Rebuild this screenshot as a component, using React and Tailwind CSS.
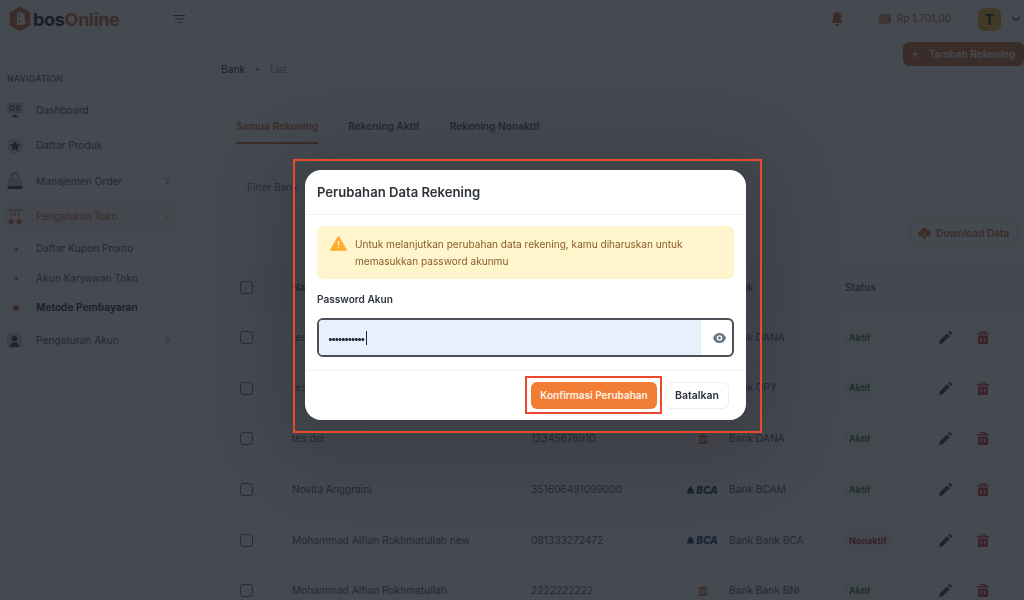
import { ChevronRight, ChevronDown, Plus } from "lucide-react";

const rows = [
  { name: "tes", number: "", logo: "", bank: "Bank DANA", active: true },
  { name: "tes", number: "", logo: "", bank: "Bank GPY", active: true },
  { name: "tes del", number: "12345678910", logo: "bank", bank: "Bank DANA", active: true },
  { name: "Novita Anggraini", number: "351606491099000", logo: "bca", bank: "Bank BCAM", active: true },
  { name: "Mohammad Alfian Rokhmatullah new", number: "081333272472", logo: "bca", bank: "Bank Bank BCA", active: false },
  { name: "Mohammad Alfian Rokhmatullah", number: "2222222222", logo: "bank", bank: "Bank Bank BNI", active: true },
];

function LogoMark() {
  return (
    <svg width="22" height="24" viewBox="0 0 22 24" className="shrink-0">
      <path d="M11 0.500 20.500 6v12L11 23.500 1.500 18V6z" fill="#c9703a" stroke="#c9703a" strokeLinejoin="round" strokeWidth="1.500" />
      <path d="M8 5.500h4.500a3.200 3.200 0 0 1 2 5.700 3.600 3.600 0 0 1-1.800 6.800H8z" fill="#ffffff" />
      <path d="M10.500 8.500v2M10.500 13.500v2" stroke="#c9703a" strokeWidth="1.600" />
    </svg>
  );
}

function DashboardIcon() {
  return (
    <svg width="16" height="16" viewBox="0 0 16 16" fill="none">
      <rect x="0.500" y="0.500" width="15" height="11" rx="1.500" fill="#c0c8cf" />
      <circle cx="5" cy="6" r="2.200" stroke="#3f4a57" />
      <path d="M9 4.500h4M9 6.200h4M9 8h4" stroke="#3f4a57" />
      <path d="M5 14.500h6M8 12v2" stroke="#3f4a57" strokeWidth="1.400" />
    </svg>
  );
}

function StarIcon() {
  return (
    <svg width="16" height="16" viewBox="0 0 16 16">
      <circle cx="8" cy="8" r="8" fill="#d5dbe0" />
      <path d="m8 3 1.600 3.300 3.600.5-2.600 2.500.6 3.600L8 10.700l-3.200 1.700.6-3.600-2.600-2.500 3.600-.5z" fill="#3f4a57" />
    </svg>
  );
}

function BagIcon() {
  return (
    <svg width="16" height="18" viewBox="0 0 16 18" fill="none">
      <path d="M1.500 6.500h13l1 8.500H.5z" fill="#c0c8cf" />
      <path d="M4.800 6.500V4a3.200 3.200 0 0 1 6.400 0v2.500" stroke="#3f4a57" />
      <rect x="0.500" y="14" width="15" height="3" rx="1" fill="#3f4a57" />
    </svg>
  );
}

function StoreIcon() {
  return (
    <svg width="16" height="16" viewBox="0 0 16 16" fill="none">
      <path d="M1 1h14M3.500 1l1.500 7M12.500 1 11 8M8 1v6" stroke="#d9a688" strokeWidth="1.400" />
      <circle cx="4" cy="12.500" r="2.600" fill="#c9703a" />
      <circle cx="12" cy="12.500" r="2.600" fill="#c9703a" />
    </svg>
  );
}

function UserIcon() {
  return (
    <svg width="15" height="15" viewBox="0 0 15 15">
      <rect width="15" height="15" rx="2" fill="#d5dbe0" />
      <circle cx="7.500" cy="5.500" r="2.800" fill="#3f4a57" />
      <path d="M2.800 14c.3-3.200 2.200-4.800 4.700-4.800s4.400 1.600 4.700 4.800z" fill="#3f4a57" />
    </svg>
  );
}

function BankIcon() {
  return (
    <svg width="10" height="10" viewBox="0 0 10 10" fill="#d9703a">
      <path d="M5 0 .5 2.600v1h9v-1zM1.300 4.300h1.200v3.400H1.300zM3.200 4.300h1.200v3.400H3.200zM5.600 4.300h1.200v3.400H5.600zM7.500 4.300h1.200v3.400H7.500zM.5 8.300h9V10h-9z" />
    </svg>
  );
}

function BcaLogo() {
  return (
    <span className="flex items-center gap-[2px]">
      <svg width="7" height="8" viewBox="0 0 7 8" fill="#0b3f6e">
        <path d="M3.500 0 6 3.200 7 7.500H0L1 3.200z" />
      </svg>
      <span className="text-[10px] font-extrabold italic leading-none text-[#0b3f6e]">BCA</span>
    </span>
  );
}

function TrashIcon() {
  return (
    <svg width="12" height="13" viewBox="0 0 12 13" fill="#c9483c">
      <path d="M4 0h4a1 1 0 0 1 1 1v1h3v1.500H0V2h3V1a1 1 0 0 1 1-1zm.3 1.200V2h3.400v-.8zM1 4.500h10V12a1 1 0 0 1-1 1H2a1 1 0 0 1-1-1z" />
      <path d="M4.200 6.500v3.800M7.800 6.500v3.800" stroke="#ffffff" strokeWidth="1.200" />
    </svg>
  );
}

function PencilIcon() {
  return (
    <svg width="13" height="13" viewBox="0 0 13 13" fill="#3f4a57">
      <path d="M0 13l.8-3.600L8 2.200 10.800 5l-7.200 7.200zM9 1.200 10 .3a1 1 0 0 1 1.400 0l1.300 1.300a1 1 0 0 1 0 1.400l-1 1z" />
    </svg>
  );
}

function NavItem({ icon, label, chevron, active }) {
  return (
    <div className={`flex h-[35.400px] items-center rounded-lg pl-[2px] pr-[5px] ${active ? "bg-[#f7f3f0]" : ""}`}>
      <span className="flex w-[29px] shrink-0 justify-start">{icon}</span>
      <span className={`flex-1 text-[10.200px] ${active ? "text-[#c9703a]" : "text-[#55606c]"}`}>{label}</span>
      {chevron === "right" && <ChevronRight size={11} color="#3f4a57" />}
      {chevron === "down" && <ChevronDown size={11} color="#c9703a" />}
    </div>
  );
}

function SubItem({ label, active }) {
  return (
    <div className="flex h-[29.500px] items-center pl-[2px]">
      <span className="flex w-[29px] justify-start pl-[6px]">
        <span className={active ? "h-[6px] w-[6px] rounded-full bg-[#c9703a]" : "ml-[1.500px] h-[3px] w-[3px] rounded-full bg-[#6b7682]"} />
      </span>
      <span className={`text-[10.200px] ${active ? "font-semibold text-[#212b36]" : "text-[#55606c]"}`}>{label}</span>
    </div>
  );
}

function Sidebar() {
  return (
    <aside className="w-[191px] shrink-0 border-r border-dashed border-[#eceef0] pl-[5px] pr-[12px] pt-[35px]">
      <div className="mb-[7px] pl-[2px] text-[8.500px] font-semibold tracking-[0.3px] text-[#6b7682]">NAVIGATION</div>
      <NavItem icon={<DashboardIcon />} label="Dashboard" />
      <NavItem icon={<StarIcon />} label="Daftar Produk" />
      <NavItem icon={<BagIcon />} label="Manajemen Order" chevron="right" />
      <NavItem icon={<StoreIcon />} label="Pengaturan Toko" chevron="down" active />
      <SubItem label="Daftar Kupon Promo" />
      <SubItem label="Akun Karyawan Toko" />
      <SubItem label="Metode Pembayaran" active />
      <NavItem icon={<UserIcon />} label="Pengaturan Akun" chevron="right" />
    </aside>
  );
}

function Header() {
  return (
    <header className="relative z-10 flex h-[38px] shrink-0 items-center bg-white pl-[9px] pr-[1px]">
      <LogoMark />
      <span className="ml-[2px] text-[18px] font-bold tracking-[-0.3px] text-[#212b36]">
        bos<span className="text-[#c9703a]">Online</span>
      </span>
      <svg width="12" height="8" viewBox="0 0 12 8" className="ml-[53px]" stroke="#3f4a57" fill="none">
        <path d="M0 .5h12M2 4h9M5 7.500h4" />
      </svg>
      <div className="ml-auto flex items-center">
        <svg width="12" height="14" viewBox="0 0 12 14" fill="#c9703a">
          <path d="M6 0a4 4 0 0 1 4 4v4l2 3H0l2-3V4a4 4 0 0 1 4-4zM4 12h4a2 2 0 0 1-4 0z" />
        </svg>
        <div className="ml-[36px] flex items-center gap-[6px]">
          <svg width="12" height="10" viewBox="0 0 12 10" fill="#d9a688">
            <rect width="12" height="10" rx="2" />
            <circle cx="10" cy="5" r="1.800" fill="#c9703a" />
          </svg>
          <span className="text-[10.200px] text-[#c9703a]">Rp 1.701,00</span>
        </div>
        <div className="ml-[27px] flex h-[23px] w-[23px] items-center justify-center rounded-md bg-[#ecb52e] text-[14px] font-bold text-[#212b36]">T</div>
        <ChevronDown size={14} color="#3f4a57" className="ml-[8px]" />
      </div>
    </header>
  );
}

function TableRow({ row }) {
  return (
    <div className="grid h-[50.700px] grid-cols-[71px_239px_157px_41px_116px_94px_38px_1fr] items-center border-b border-dashed border-[#f4f5f6] text-[10.200px] text-[#55606c]">
      <span className="pl-[19px]">
        <span className="block h-[13px] w-[13px] rounded-[3px] border-[1.500px] border-[#6b7682]" />
      </span>
      <span>{row.name}</span>
      <span>{row.number}</span>
      <span className="flex justify-center pr-[12px]">
        {row.logo === "bank" && <BankIcon />}
        {row.logo === "bca" && <BcaLogo />}
      </span>
      <span>{row.bank}</span>
      <span>
        {row.active ? (
          <span className="rounded bg-[#f3f6f3] px-[4px] py-[2px] text-[9px] font-bold text-[#2f7a4a]">Aktif</span>
        ) : (
          <span className="rounded bg-[#f7f2f2] px-[4px] py-[2px] text-[9px] font-bold text-[#9c3a34]">Nonaktif</span>
        )}
      </span>
      <PencilIcon />
      <TrashIcon />
    </div>
  );
}

function MainContent() {
  return (
    <main className="min-w-0 flex-1 pl-[30px]">
      <div className="flex h-[24px] justify-end">
        <div className="mt-[4px] flex h-[24px] w-[121px] items-center gap-[8px] rounded-md bg-[#c9703a] pl-[6px] text-[10px] font-semibold text-white">
          <Plus size={12} color="#ffffff" />
          Tambah Rekening
        </div>
      </div>
      <div className="flex items-center gap-[11px] text-[10.200px]">
        <span className="text-[#212b36]">Bank</span>
        <span className="h-[3px] w-[3px] rounded-full bg-[#6b7682]" />
        <span className="text-[#8a95a0]">List</span>
      </div>
      <div className="mt-[42px] flex gap-[30px] pl-[15px] text-[10.200px] font-semibold text-[#55606c]">
        <span className="border-b-2 border-[#c9703a] pb-[7px] text-[#c9703a]">Semua Rekening</span>
        <span>Rekening Aktif</span>
        <span>Rekening Nonaktif</span>
      </div>
      <div className="ml-[15px] mt-[26.500px] flex h-[36px] w-[170px] items-center rounded-md border border-[#f1f3f4] pl-[10px] text-[10.200px] text-[#6b7682]">
        Filter Bank
      </div>
      <div className="mt-[14.500px] flex h-[26px] justify-end pr-[6px]">
        <div className="flex w-[108px] items-center gap-[5px] rounded-md border border-[#ece2da] pl-[7px] text-[10px] font-semibold text-[#c9703a]">
          <svg width="13" height="13" viewBox="0 0 13 13" fill="#c9703a">
            <path d="M3.500 9.500a3 3 0 0 1-.4-6 3.500 3.500 0 0 1 6.800 0 3 3 0 0 1-.4 6z" />
            <path d="M5.800 6h1.400v4H9l-2.500 3L4 10h1.800z" stroke="#ffffff" strokeWidth=".5" />
          </svg>
          Download Data
        </div>
      </div>
      <div className="mt-[16px]">
        <div className="grid h-[50px] grid-cols-[71px_239px_157px_41px_116px_1fr] items-center bg-[#f8f9fa] text-[10px] font-semibold text-[#55606c]">
          <span className="pl-[19px]">
            <span className="block h-[13px] w-[13px] rounded-[3px] border-[1.500px] border-[#6b7682]" />
          </span>
          <span>Nama</span>
          <span>Nomor Rekening</span>
          <span />
          <span>Bank</span>
          <span>Status</span>
        </div>
        {rows.map((row, i) => (
          <TableRow key={i} row={row} />
        ))}
      </div>
    </main>
  );
}

function ConfirmModal() {
  return (
    <div className="absolute inset-0 z-20 flex items-start justify-center bg-[#161c24]/80 pl-[27px] pt-[170px] backdrop-blur-[0.5px]">
      <div className="relative w-[441px] rounded-2xl bg-white shadow-[0_12px_70px_30px_rgba(0,0,0,0.14)]">
        <span className="absolute -bottom-[13px] -left-[12px] -right-[16px] -top-[11px] border-2 border-[#e8492f]" />
        <div className="flex h-[45px] items-center border-b border-[#f1f3f4] px-3 pt-[1px] text-[13.100px] font-semibold text-[#2d333b]">
          Perubahan Data Rekening
        </div>
        <div className="px-3 pt-[11px]">
          <div className="flex h-[53px] items-start gap-[8px] rounded-md bg-[#fff5cc] pl-[13px] pt-[10px]">
            <svg width="17" height="15" viewBox="0 0 17 15" className="shrink-0">
              <path d="M8.500 1 16 14H1z" fill="#ffab2e" stroke="#ffab2e" strokeWidth="1.600" strokeLinejoin="round" />
              <path d="M8.500 5v4.500M8.500 11v1" stroke="#fff5cc" strokeWidth="1.400" />
            </svg>
            <p className="text-[10.100px] leading-[16.500px] text-[#8a5c28]">
              Untuk melanjutkan perubahan data rekening, kamu diharuskan untuk memasukkan password akunmu
            </p>
          </div>
          <div className="mt-[14px] text-[10.100px] font-semibold leading-[13px] text-[#2d333b]">Password Akun</div>
          <div className="mt-[12px] flex h-[39px] items-stretch rounded-md border-2 border-[#4a4f57]">
            <div className="flex w-[382px] items-center rounded-l-[4px] bg-[#e8f0fe] pl-[9px]">
              <span className="text-[10px] font-bold leading-none tracking-[-1.500px] text-[#212b36]">•••••••••••</span>
              <span className="ml-[2px] h-[14px] w-px bg-[#212b36]" />
            </div>
            <div className="flex flex-1 items-center justify-center pl-[6px]">
              <svg width="13" height="10" viewBox="0 0 13 10" fill="#637381">
                <path fillRule="evenodd" d="M6.500 0C9.500 0 11.900 2 13 5c-1.100 3-3.500 5-6.500 5S1.100 8 0 5C1.100 2 3.500 0 6.500 0zm0 2.200a2.800 2.800 0 1 0 0 5.600 2.800 2.800 0 0 0 0-5.600zm0 1.400a1.400 1.400 0 1 1 0 2.800 1.400 1.400 0 0 1 0-2.800z" />
              </svg>
            </div>
          </div>
        </div>
        <div className="mt-[13px] flex h-[50px] items-center justify-end gap-[8px] border-t border-[#f1f3f4] pr-[17px]">
          <div className="relative flex h-[27px] w-[126px] items-center justify-center rounded-md bg-[#f27d34] text-[10px] font-semibold text-[#fff3ea]">
            Konfirmasi Perubahan
            <span className="absolute -bottom-[5px] -left-[6px] -right-[5px] -top-[6px] border-2 border-[#e8492f]" />
          </div>
          <div className="flex h-[27px] w-[64px] items-center justify-center rounded-md border border-[#eceef0] text-[10.500px] font-semibold text-[#2d333b]">
            Batalkan
          </div>
        </div>
      </div>
    </div>
  );
}

export default function App() {
  return (
    <div className="relative flex h-[600px] w-[1024px] flex-col overflow-hidden bg-white font-['Inter','Liberation_Sans',sans-serif]">
      <Header />
      <div className="flex min-h-0 flex-1">
        <Sidebar />
        <MainContent />
      </div>
      <ConfirmModal />
    </div>
  );
}
